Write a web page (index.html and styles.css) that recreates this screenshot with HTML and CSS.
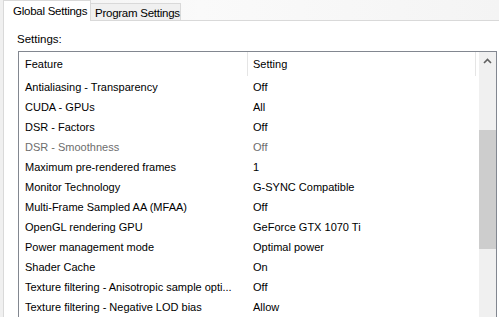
FILE: index.html
```html
<!DOCTYPE html>
<html lang="en">
<head>
    <meta charset="UTF-8">
    <meta name="viewport" content="width=device-width, initial-scale=1.0">
    <title>Manage 3D Settings</title>
    <link rel="stylesheet" href="styles.css">
</head>
<body>

<div class="window">
    <!-- Tab strip -->
    <div class="tabs">
        <div class="tab active">Global Settings</div>
        <div class="tab">Program Settings</div>
    </div>

    <div class="tab-page">
        <div class="caption">Settings:</div>

        <div class="listview">
            <div class="list-body">
                <div class="list-header">
                    <div class="col col-feature">Feature</div>
                    <div class="col col-setting">Setting</div>
                </div>
                <div class="row"><div class="col col-feature">Antialiasing - Transparency</div><div class="col col-setting">Off</div></div>
                <div class="row"><div class="col col-feature">CUDA - GPUs</div><div class="col col-setting">All</div></div>
                <div class="row"><div class="col col-feature">DSR - Factors</div><div class="col col-setting">Off</div></div>
                <div class="row disabled"><div class="col col-feature">DSR - Smoothness</div><div class="col col-setting">Off</div></div>
                <div class="row"><div class="col col-feature">Maximum pre-rendered frames</div><div class="col col-setting">1</div></div>
                <div class="row"><div class="col col-feature">Monitor Technology</div><div class="col col-setting">G-SYNC Compatible</div></div>
                <div class="row"><div class="col col-feature">Multi-Frame Sampled AA (MFAA)</div><div class="col col-setting">Off</div></div>
                <div class="row"><div class="col col-feature">OpenGL rendering GPU</div><div class="col col-setting">GeForce GTX 1070 Ti</div></div>
                <div class="row"><div class="col col-feature">Power management mode</div><div class="col col-setting">Optimal power</div></div>
                <div class="row"><div class="col col-feature">Shader Cache</div><div class="col col-setting">On</div></div>
                <div class="row"><div class="col col-feature">Texture filtering - Anisotropic sample opti...</div><div class="col col-setting">Off</div></div>
                <div class="row"><div class="col col-feature">Texture filtering - Negative LOD bias</div><div class="col col-setting">Allow</div></div>
            </div>

            <!-- Vertical scrollbar -->
            <div class="scrollbar">
                <div class="scroll-btn">
                    <svg width="9" height="6" viewBox="0 0 9 6"><polyline points="1,5 4.5,1.5 8,5" fill="none" stroke="#606060" stroke-width="1.6"/></svg>
                </div>
                <div class="scroll-track">
                    <div class="scroll-thumb"></div>
                </div>
                <div class="scroll-btn">
                    <svg width="9" height="6" viewBox="0 0 9 6"><polyline points="1,1 4.5,4.5 8,1" fill="none" stroke="#606060" stroke-width="1.6"/></svg>
                </div>
            </div>
        </div>
    </div>
</div>

</body>
</html>
```

FILE: styles.css
```css
html, body {
    margin: 0;
    padding: 0;
    overflow: hidden;
}
body {
    font-family: "Liberation Sans", Arial, sans-serif;
    font-size: 11px;
    color: #000;
    background-color: #f0f0f0;
    width: 499px;
    height: 317px;
}
.window {
    display: flex;
    flex-direction: column;
    height: 317px;
}
.tabs {
    display: flex;
    align-items: flex-end;
    height: 20px;
    padding-left: 3px;
    background: linear-gradient(to right, #f0f0f0, #fafafa 40%, #f4f4f4);
}
.tab {
    box-sizing: border-box;
    height: 17px;
    width: 90px;
    padding-left: 4px;
    line-height: 18px;
    font-size: 11.5px;
    letter-spacing: -0.25px;
    white-space: nowrap;
    border: 1px solid #d9d9d9;
    border-bottom: none;
    border-left: none;
    background-color: #f0f0f0;
}
.tab.active {
    height: 21px;
    width: 88px;
    padding-left: 9px;
    line-height: 20px;
    margin-bottom: -1px;
    background-color: #fff;
    border-left: 1px solid #d9d9d9;
    position: relative;
    z-index: 1;
}
.tab-page {
    flex: 1;
    margin-left: 3px;
    background-color: #fff;
    border-top: 1px solid #d9d9d9;
    border-left: 1px solid #d9d9d9;
    padding: 11px 0 0 13px;
    overflow: hidden;
}
.caption {
    font-size: 11.5px;
    height: 14px;
    line-height: 14px;
    white-space: nowrap;
    margin-bottom: 5px;
}
.listview {
    display: flex;
    width: 477px;
    height: 280px;
    margin-left: 1px;
    border: 1px solid #828790;
    background-color: #fff;
}
.list-body {
    flex: 1;
}
.list-header {
    display: flex;
    height: 25px;
    line-height: 25px;
}
.list-header .col {
    border-right: 1px solid #e5e5e5;
    height: 24px;
}
.row {
    display: flex;
    height: 20px;
    line-height: 20px;
}
.row.disabled {
    color: #6d6d6d;
}
.col {
    box-sizing: border-box;
    white-space: nowrap;
    overflow: hidden;
}
.col-feature {
    width: 229px;
    padding-left: 6px;
}
.col-setting {
    width: 228px;
    padding-left: 5px;
}
.scrollbar {
    width: 17px;
    display: flex;
    flex-direction: column;
    background-color: #f0f0f0;
}
.scroll-btn {
    height: 17px;
    display: flex;
    align-items: center;
    justify-content: center;
}
.scroll-track {
    flex: 1;
    padding-top: 61px;
}
.scroll-thumb {
    height: 119px;
    background-color: #cdcdcd;
}
```
